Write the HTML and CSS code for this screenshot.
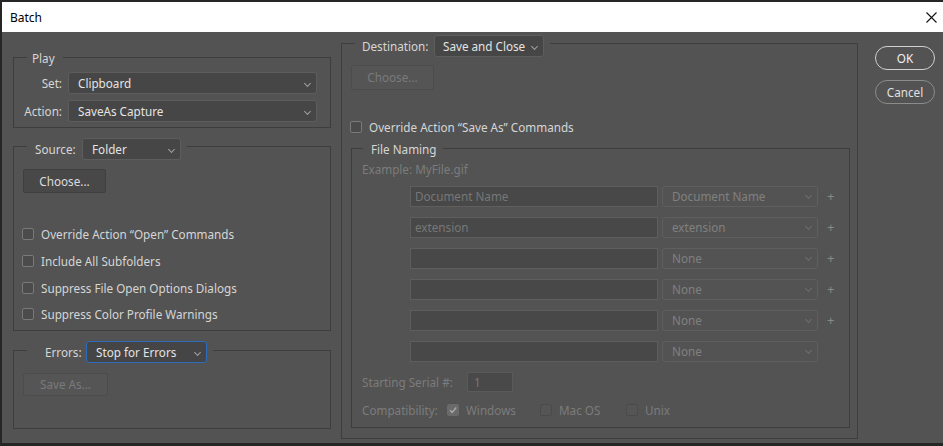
FILE: index.html
```html
<!DOCTYPE html>
<html>
<head>
<meta charset="utf-8">
<title>Batch</title>
<link rel="stylesheet" href="styles.css">
</head>
<body>
<div class="window">
  <div class="titlebar">
    <span class="title">Batch</span>
    <svg class="close" width="11" height="11" viewBox="0 0 11 11"><path d="M0.5 0.5 L10.5 10.5 M10.5 0.5 L0.5 10.5" stroke="#111" stroke-width="1.1" fill="none"/></svg>
  </div>
  <div class="content">
    <div class="col-left">
      <div class="group g-play">
        <div class="ghead h-play"><span class="glabel">Play</span></div>
        <div class="play-grid">
          <span class="lbl">Set:</span>
          <div class="select">Clipboard<span class="chev"></span></div>
          <span class="lbl">Action:</span>
          <div class="select">SaveAs Capture<span class="chev"></span></div>
        </div>
      </div>

      <div class="group g-source">
        <div class="ghead h-source"><span class="glabel">Source:</span><div class="select sel-source">Folder<span class="chev"></span></div></div>
        <div class="btn btn-choose">Choose...</div>
        <div class="checks">
          <div class="check"><span class="box"></span><span>Override Action “Open” Commands</span></div>
          <div class="check"><span class="box"></span><span>Include All Subfolders</span></div>
          <div class="check"><span class="box"></span><span>Suppress File Open Options Dialogs</span></div>
          <div class="check"><span class="box"></span><span>Suppress Color Profile Warnings</span></div>
        </div>
      </div>

      <div class="group g-errors">
        <div class="ghead h-errors"><span class="glabel">Errors:</span><div class="select sel-errors focus">Stop for Errors<span class="chev"></span></div></div>
        <div class="btn disabled btn-saveas">Save As...</div>
      </div>
    </div>

    <div class="col-mid">
      <div class="group g-dest">
        <div class="ghead h-dest"><span class="glabel">Destination:</span><div class="select sel-dest">Save and Close<span class="chev"></span></div></div>
        <div class="btn disabled btn-choose2">Choose...</div>
        <div class="check override"><span class="box"></span><span>Override Action “Save As” Commands</span></div>

        <div class="group g-naming">
          <div class="ghead h-naming"><span class="glabel">File Naming</span></div>
          <div class="example">Example: MyFile.gif</div>
          <div class="rows">
            <div class="row"><div class="input">Document Name</div><div class="select dis">Document Name<span class="chev"></span></div><span class="plus">+</span></div>
            <div class="row"><div class="input">extension</div><div class="select dis">extension<span class="chev"></span></div><span class="plus">+</span></div>
            <div class="row"><div class="input"></div><div class="select dis">None<span class="chev"></span></div><span class="plus">+</span></div>
            <div class="row"><div class="input"></div><div class="select dis">None<span class="chev"></span></div><span class="plus">+</span></div>
            <div class="row"><div class="input"></div><div class="select dis">None<span class="chev"></span></div><span class="plus">+</span></div>
            <div class="row"><div class="input"></div><div class="select dis">None<span class="chev"></span></div></div>
          </div>
          <div class="serial"><span class="serial-lbl">Starting Serial #:</span><div class="input small">1</div></div>
          <div class="compat">
            <span class="compat-lbl">Compatibility:</span>
            <div class="check dis c-win"><span class="box checked"><svg width="10" height="10" viewBox="0 0 10 10"><path d="M2 5.2 L4.2 7.4 L8.2 2.6" stroke="#a8a8a8" stroke-width="1.5" fill="none"/></svg></span><span>Windows</span></div>
            <div class="check dis c-mac"><span class="box"></span><span>Mac OS</span></div>
            <div class="check dis c-unix"><span class="box"></span><span>Unix</span></div>
          </div>
        </div>
      </div>
    </div>

    <div class="col-right">
      <div class="pill ok">OK</div>
      <div class="pill cancel">Cancel</div>
    </div>
  </div>
</div>
</body>
</html>
```

FILE: styles.css
```css
* { box-sizing: border-box; }
html, body { margin: 0; padding: 0; }
body {
  font-family: "Noto Sans", "Open Sans", sans-serif;
  font-size: 11.7px;
  color: #d6d6d6;
  background: #2a2a2a;
}
.window {
  width: 943px;
  height: 446px;
  background: #535353;
  border-top: 2px solid #262626;
  border-left: 2px solid #262626;
  border-bottom: 3px solid #262626;
  overflow: hidden;
}
.titlebar {
  height: 30px;
  background: #ffffff;
  display: flex;
  align-items: center;
  justify-content: space-between;
  padding: 0 6px 0 8px;
  color: #000;
}
.title { font-size: 12px; }
.close { margin-top: 1px; }

.content { display: flex; align-items: flex-start; }

.col-left { margin-left: 11px; width: 318px; display: flex; flex-direction: column; }
.col-mid { margin-left: 10px; width: 517px; }
.col-right { margin-left: 17px; display: flex; flex-direction: column; }

.group { border: 1px solid #3d3d3d; }
.ghead {
  display: flex;
  align-items: center;
  width: fit-content;
  background: #535353;
  gap: 5px;
}
.glabel { white-space: nowrap; }

/* Play */
.g-play { margin-top: 25px; height: 71px; }
.h-play { margin: -9px 0 0 13px; padding: 0 8px 0 5px; height: 17px; }
.play-grid {
  display: grid;
  grid-template-columns: 48px 249px;
  column-gap: 6px;
  row-gap: 6px;
  margin-top: 6px;
}
.play-grid .lbl { text-align: right; line-height: 22px; }

.select {
  position: relative;
  height: 22px;
  line-height: 20px;
  background: #464646;
  border: 1px solid #5d5d5d;
  border-radius: 3px;
  padding: 0 18px 0 9px;
  color: #e4e4e4;
  white-space: nowrap;
}
.chev {
  position: absolute;
  right: 6px;
  top: 8px;
  width: 5px;
  height: 5px;
  border-right: 1px solid #a0a0a0;
  border-bottom: 1px solid #a0a0a0;
  transform: rotate(45deg);
}

/* Source */
.g-source { margin-top: 18px; height: 185px; }
.h-source { margin: -9px 0 0 13px; padding: 0 6px 0 8px; }
.h-source .glabel { width: 42px; }
.sel-source { width: 99px; }
.btn {
  height: 24px;
  line-height: 22px;
  text-align: center;
  background: #484848;
  border: 1px solid #3f3f3f;
  border-radius: 2px;
  color: #dcdcdc;
}
.btn.disabled { background: #555555; border-color: #4c4c4c; color: #7a7a7a; }
.btn-choose { width: 83px; margin: 9px 0 0 9px; }
.checks { margin-top: 28px; margin-left: 8px; }
.check {
  display: flex;
  align-items: center;
  gap: 7px;
  white-space: nowrap;
}
.checks .check { height: 26.67px; }
.box {
  width: 12px;
  height: 12px;
  border: 1px solid #7a7a7a;
  border-radius: 2px;
  background: #4b4b4b;
  display: flex;
  align-items: center;
  justify-content: center;
  flex: none;
}

/* Errors */
.g-errors { margin-top: 19px; height: 79px; }
.h-errors { margin: -10px 0 0 13px; padding: 0 6px 0 18px; }
.h-errors .glabel { width: 36px; }
.sel-errors { width: 121px; }
.select.focus { border-color: #2d6bbd; background: #454545; }
.btn-saveas { width: 85px; height: 23px; line-height: 21px; margin: 10px 0 0 9px; }

/* Destination */
.g-dest { margin-top: 11px; height: 396px; }
.h-dest { margin: -9px 0 0 13px; padding: 0 6px 0 7px; gap: 4px; }
.h-dest .glabel { width: 68px; }
.sel-dest { width: 110px; padding-left: 8px; }
.btn-choose2 { width: 83px; height: 25px; line-height: 23px; margin: 8px 0 0 9px; }
.override { height: 18px; margin: 28px 0 0 8px; }

.g-naming { margin: 12px 0 0 9px; width: 499px; height: 280px; }
.h-naming { margin: -9px 0 0 11px; padding: 0 6px 0 8px; height: 17px; }
.example { margin: 4px 0 0 10px; height: 17px; line-height: 17px; color: #7c7c7c; }
.rows { margin: 8px 0 0 58px; display: flex; flex-direction: column; gap: 10px; }
.row { display: flex; align-items: center; height: 21px; }
.input {
  width: 248px;
  height: 21px;
  line-height: 19px;
  background: #484848;
  border: 1px solid #5e5e5e;
  padding: 0 4px;
  color: #777777;
}
.select.dis {
  margin-left: 4px;
  width: 156px;
  height: 21px;
  line-height: 19px;
  background: #535353;
  border-color: #5f5f5f;
  color: #808080;
  padding-left: 9px;
}
.select.dis .chev { border-color: #6e6e6e; top: 6px; }
.plus { margin-left: 9px; color: #8a8a8a; font-size: 13px; line-height: 21px; }

.serial { display: flex; align-items: center; margin: 10px 0 0 10px; height: 20px; color: #7c7c7c; }
.serial-lbl { width: 105px; white-space: nowrap; }
.input.small { width: 46px; height: 20px; line-height: 18px; padding-left: 6px; color: #777; background: #494949; border-color: #5a5a5a; }

.compat { display: flex; align-items: center; margin: 9px 0 0 10px; height: 18px; color: #7c7c7c; }
.compat-lbl { width: 85px; white-space: nowrap; }
.check.dis .box { border-color: #4a4a4a; background: #555555; }
.check.dis .box.checked { background: #6a6a6a; border-color: #6a6a6a; }
.c-win { width: 93px; }
.c-mac { width: 86px; }

/* Right buttons */
.pill {
  width: 60px;
  height: 24px;
  line-height: 22px;
  text-align: center;
  border-radius: 12px;
  border: 1px solid #8c8c8c;
  color: #e0e0e0;
}
.ok { margin-top: 14px; border-color: #d0d0d0; color: #f0f0f0; }
.cancel { margin-top: 10px; }
```
